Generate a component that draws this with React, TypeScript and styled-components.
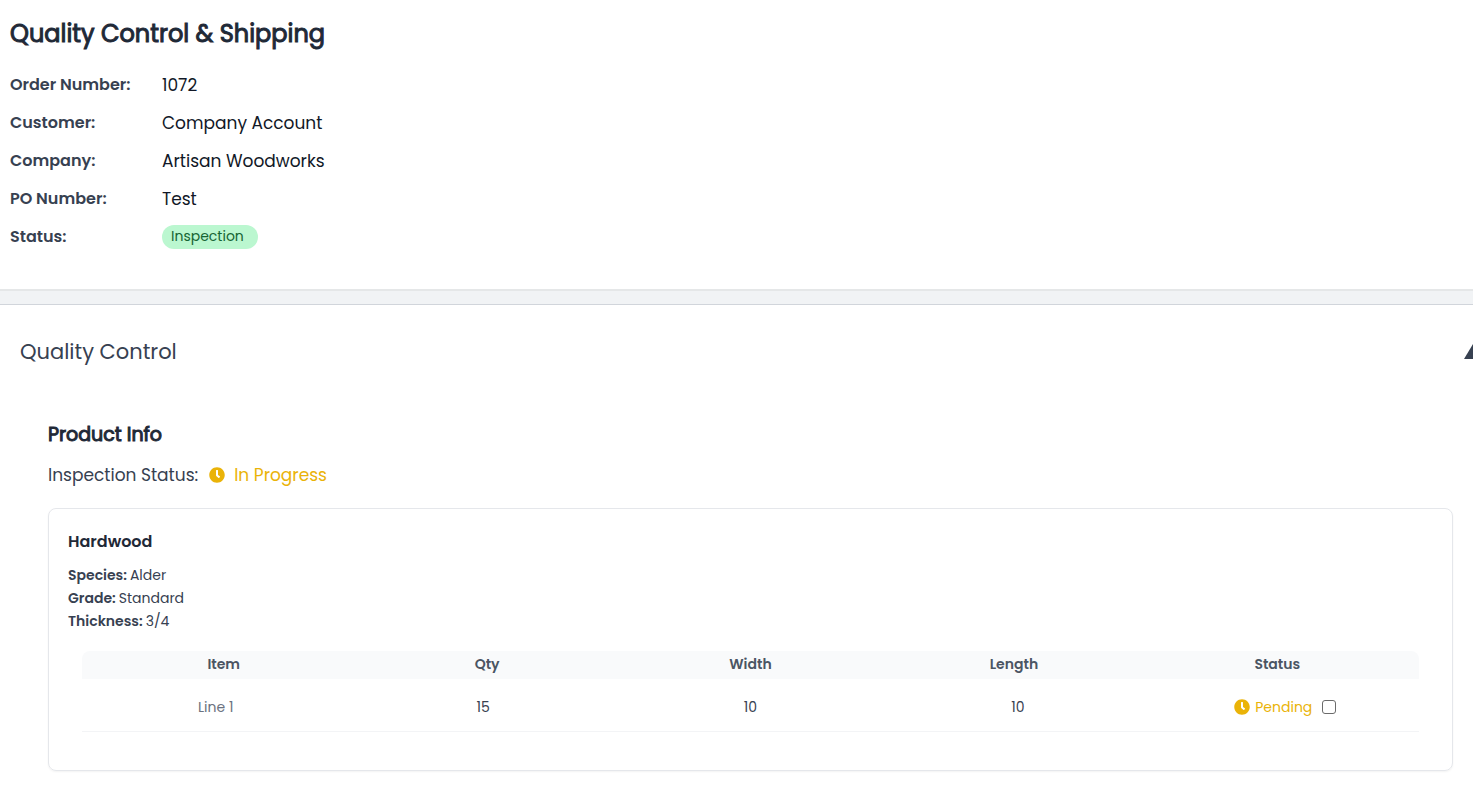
import React, { useState } from "react";
import styled, { createGlobalStyle } from "styled-components";
import { FaClock } from "react-icons/fa";

const GlobalStyle = createGlobalStyle`
  *, *::before, *::after { box-sizing: border-box; }
  body {
    margin: 0;
    background: #fff;
    color: #111827;
    font-family: Poppins, Inter, "Liberation Sans", sans-serif;
    font-size: 17px;
    line-height: 24px;
  }
  h1, h2, h3, h4, p, dl, dd { margin: 0; }
`;

const Page = styled.main`
  overflow-x: clip;
`;

const Summary = styled.header`
  padding: 16px 10px 40px;
`;

const Title = styled.h1`
  margin-bottom: 21px;
  color: #1f2937;
  font-size: 24px;
  font-weight: 400;
  line-height: 36px;
  -webkit-text-stroke: 1px currentColor;
`;

const Details = styled.dl`
  display: grid;
  grid-template-columns: 152px 1fr;
  row-gap: 14px;
`;

const DetailLabel = styled.dt`
  color: #374151;
  font-size: 16px;
  font-weight: 600;
`;

const DetailValue = styled.dd`
  display: flex;
`;

const Badge = styled.span`
  padding: 0 14px 2px 9px;
  border-radius: 12px;
  background: #bbf7d0;
  color: #166534;
  font-size: 14px;
  line-height: 22px;
`;

const Divider = styled.div`
  height: 16px;
  border-top: 2px solid #e5e7e8;
  border-bottom: 1px solid #d1d5db;
  background: #f1f3f5;
`;

const SectionHeader = styled.div`
  display: flex;
  align-items: center;
  justify-content: space-between;
  margin-right: -9px;
  padding: 30px 0 30px 20px;
`;

const SectionTitle = styled.h2`
  color: #374151;
  font-size: 21px;
  font-weight: 400;
  line-height: 34px;
`;

const Toggle = styled.button<{ $open: boolean }>`
  display: flex;
  padding: 0;
  border: 0;
  background: none;
  color: #374151;
  cursor: pointer;
  transform: ${({ $open }) => ($open ? "none" : "rotate(180deg)")};
`;

const SectionBody = styled.div`
  padding: 20px 20px 15px 48px;
`;

const ProductTitle = styled.h3`
  margin-bottom: 12px;
  color: #1f2937;
  font-size: 19px;
  font-weight: 400;
  line-height: 32px;
  -webkit-text-stroke: 1px currentColor;
`;

const InspectionStatus = styled.p`
  display: flex;
  gap: 11px;
  margin-bottom: 21px;
  color: #374151;
`;

const Progress = styled.span<{ $gap: number }>`
  display: flex;
  align-items: center;
  gap: ${({ $gap }) => $gap}px;
  color: #eab308;

  svg { flex: none; }
`;

const Card = styled.section`
  padding: 21px 33px 38px 19px;
  border: 1px solid #e5e7eb;
  border-radius: 8px;
  box-shadow: 0 1px 2px rgba(0, 0, 0, 0.05);
`;

const CardTitle = styled.h4`
  margin-bottom: 10px;
  color: #1f2937;
  font-size: 16px;
  font-weight: 600;
`;

const Specs = styled.dl`
  margin-bottom: 18px;
  color: #374151;
  font-size: 14px;
  line-height: 23px;
`;

const Spec = styled.div`
  display: flex;
  gap: 3px;

  dt { font-weight: 600; }
`;

const Table = styled.table`
  display: block;
  margin-left: 14px;
  font-size: 14px;

  thead, tbody { display: block; }
`;

const HeadRow = styled.tr`
  display: grid;
  grid-template-columns: repeat(5, 1fr);
  padding: 0 10px 2px;
  border-radius: 8px 8px 0 0;
  background: #f9fafb;
`;

const HeadCell = styled.th`
  padding: 0;
  color: #4b5563;
  font-weight: 600;
  line-height: 26px;
`;

const Row = styled.tr`
  display: grid;
  grid-template-columns: repeat(5, 1fr);
  align-items: center;
  padding: 16px 0 12px;
  border-bottom: 1px solid #f3f4f6;
`;

const Cell = styled.td<{ $muted?: boolean }>`
  display: flex;
  align-items: center;
  justify-content: center;
  padding: 0;
  color: ${({ $muted }) => ($muted ? "#6b7280" : "#374151")};
`;

const Check = styled.input`
  appearance: none;
  width: 14px;
  height: 14px;
  margin: 0 0 0 10px;
  border: 1px solid #6b6b6b;
  border-radius: 3px;
  background: #fff;

  &:checked {
    border-color: #2563eb;
    background: #2563eb;
  }
`;

const details = [
  ["Order Number:", "1072"],
  ["Customer:", "Company Account"],
  ["Company:", "Artisan Woodworks"],
  ["PO Number:", "Test"],
];

const specs = [
  ["Species:", "Alder"],
  ["Grade:", "Standard"],
  ["Thickness:", "3/4"],
];

const columns = ["Item", "Qty", "Width", "Length", "Status"];

const lines = [{ item: "Line 1", qty: 15, width: 10, length: 10, status: "Pending" }];

export default function App() {
  const [open, setOpen] = useState(true);

  return (
    <Page>
      <GlobalStyle />
      <Summary>
        <Title>Quality Control &amp; Shipping</Title>
        <Details>
          {details.map(([label, value]) => (
            <React.Fragment key={label}>
              <DetailLabel>{label}</DetailLabel>
              <DetailValue>{value}</DetailValue>
            </React.Fragment>
          ))}
          <DetailLabel>Status:</DetailLabel>
          <DetailValue>
            <Badge>Inspection</Badge>
          </DetailValue>
        </Details>
      </Summary>
      <Divider />
      <section>
        <SectionHeader>
          <SectionTitle>Quality Control</SectionTitle>
          <Toggle
            type="button"
            $open={open}
            aria-label="Toggle quality control"
            aria-expanded={open}
            onClick={() => setOpen(!open)}
          >
            <svg width="18" height="16" viewBox="0 0 18 16" fill="currentColor" aria-hidden="true">
              <path d="M9 0L18 15H0z" />
            </svg>
          </Toggle>
        </SectionHeader>
        {open && (
          <SectionBody>
            <ProductTitle>Product Info</ProductTitle>
            <InspectionStatus>
              Inspection Status:
              <Progress $gap={9}>
                <FaClock size={16} />
                In Progress
              </Progress>
            </InspectionStatus>
            <Card>
              <CardTitle>Hardwood</CardTitle>
              <Specs>
                {specs.map(([label, value]) => (
                  <Spec key={label}>
                    <dt>{label}</dt>
                    <dd>{value}</dd>
                  </Spec>
                ))}
              </Specs>
              <Table>
                <thead>
                  <HeadRow>
                    {columns.map((name) => (
                      <HeadCell key={name} scope="col">{name}</HeadCell>
                    ))}
                  </HeadRow>
                </thead>
                <tbody>
                  {lines.map((line) => (
                    <Row key={line.item}>
                      <Cell $muted>{line.item}</Cell>
                      <Cell>{line.qty}</Cell>
                      <Cell>{line.width}</Cell>
                      <Cell>{line.length}</Cell>
                      <Cell>
                        <Progress $gap={5}>
                          <FaClock size={16} />
                          {line.status}
                        </Progress>
                        <Check type="checkbox" aria-label={`${line.item} inspected`} />
                      </Cell>
                    </Row>
                  ))}
                </tbody>
              </Table>
            </Card>
          </SectionBody>
        )}
      </section>
    </Page>
  );
}
